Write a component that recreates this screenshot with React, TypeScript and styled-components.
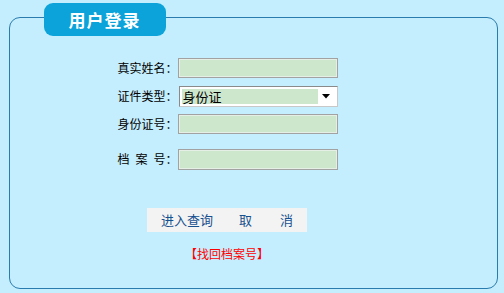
import React from "react";
import styled, { createGlobalStyle } from "styled-components";

const Global = createGlobalStyle`
  html, body { margin: 0; padding: 0; background: #c4edfd; }
  body { font-family: "Noto Sans CJK SC", "Liberation Sans", sans-serif; }
  #root { width: 504px; height: 293px; overflow: hidden; }
`;

const Page = styled.div`
  padding: 17px 6px 0 9px;
  box-sizing: border-box;
  width: 504px;
  height: 293px;
`;

const Panel = styled.div`
  position: relative;
  box-sizing: border-box;
  width: 489px;
  height: 272px;
  border: 1.5px solid #2a7cae;
  border-radius: 11px;
  background: #c4edfd;
  padding: 39.5px 0 0 106.5px;
`;

const Tab = styled.div`
  position: absolute;
  left: 33.5px;
  top: -15.5px;
  width: 122px;
  height: 33px;
  box-sizing: border-box;
  border-radius: 9px;
  background: #0ba3da;
  color: #fff;
  font-size: 17px;
  font-weight: bold;
  display: flex;
  align-items: center;
  justify-content: center;
  letter-spacing: 1px;
`;

const Content = styled.div`
  width: 221px;
  display: flex;
  flex-direction: column;
  align-items: center;
`;

const Row = styled.div<{ $top: number }>`
  display: flex;
  align-items: center;
  width: 221px;
  margin-top: ${(p) => p.$top}px;
`;

const Label = styled.label`
  width: 61px;
  text-align: right;
  font-size: 12px;
  color: #000;
  white-space: pre;
  line-height: 14px;
`;

const Input = styled.div<{ $h: number }>`
  box-sizing: border-box;
  width: 160px;
  height: ${(p) => p.$h}px;
  background: #cde7cc;
  border: 1px solid #a2a2a2;
  box-shadow: inset 0 0 0 1px #e6efe6;
`;

const Select = styled.div`
  box-sizing: border-box;
  width: 159px;
  height: 21px;
  margin-left: 1px;
  background: #fff;
  border: 1px solid #8a8a8a;
  border-bottom-color: #c8c8c8;
  border-right-color: #c8c8c8;
  display: flex;
  align-items: center;
  padding: 2px;
`;

const SelectValue = styled.div`
  flex: 1;
  height: 15px;
  background: #cde7cc;
  font-size: 13px;
  line-height: 15px;
  color: #000;
  padding-left: 1px;
`;

const Arrow = styled.div`
  width: 17px;
  display: flex;
  justify-content: center;
  align-items: center;
`;

const ButtonBar = styled.div`
  margin-top: 38px;
  width: 160px;
  height: 24px;
  background: #f3f3f3;
  display: flex;
  align-items: center;
  padding-left: 14px;
  box-sizing: border-box;
`;

const Button = styled.span<{ $w: number; $ml: number }>`
  display: flex;
  justify-content: space-between;
  width: ${(p) => p.$w}px;
  margin-left: ${(p) => p.$ml}px;
  font-size: 13px;
  color: #17508f;
  line-height: 16px;
  cursor: pointer;
`;

const Link = styled.a`
  margin-top: 15px;
  font-size: 12px;
  line-height: 14px;
  color: #f00;
  text-decoration: none;
`;

export default function App() {
  return (
    <>
      <Global />
      <Page>
        <Panel>
          <Tab>用户登录</Tab>
          <Content>
            <Row $top={0}>
              <Label>真实姓名：</Label>
              <Input $h={20} />
            </Row>
            <Row $top={8}>
              <Label>证件类型：</Label>
              <Select>
                <SelectValue>身份证</SelectValue>
                <Arrow>
                  <svg width="8" height="5" viewBox="0 0 8 5">
                    <path d="M0 0 H8 L4 4.5 Z" fill="#000" />
                  </svg>
                </Arrow>
              </Select>
            </Row>
            <Row $top={7}>
              <Label>身份证号：</Label>
              <Input $h={20} />
            </Row>
            <Row $top={15}>
              <Label>{"档\u2002案\u2002号："}</Label>
              <Input $h={21} />
            </Row>
            <ButtonBar>
              <Button $w={52} $ml={0}>进入查询</Button>
              <Button $w={54} $ml={26}>
                <span>取</span>
                <span>消</span>
              </Button>
            </ButtonBar>
            <Link href="#">【找回档案号】</Link>
          </Content>
        </Panel>
      </Page>
    </>
  );
}
